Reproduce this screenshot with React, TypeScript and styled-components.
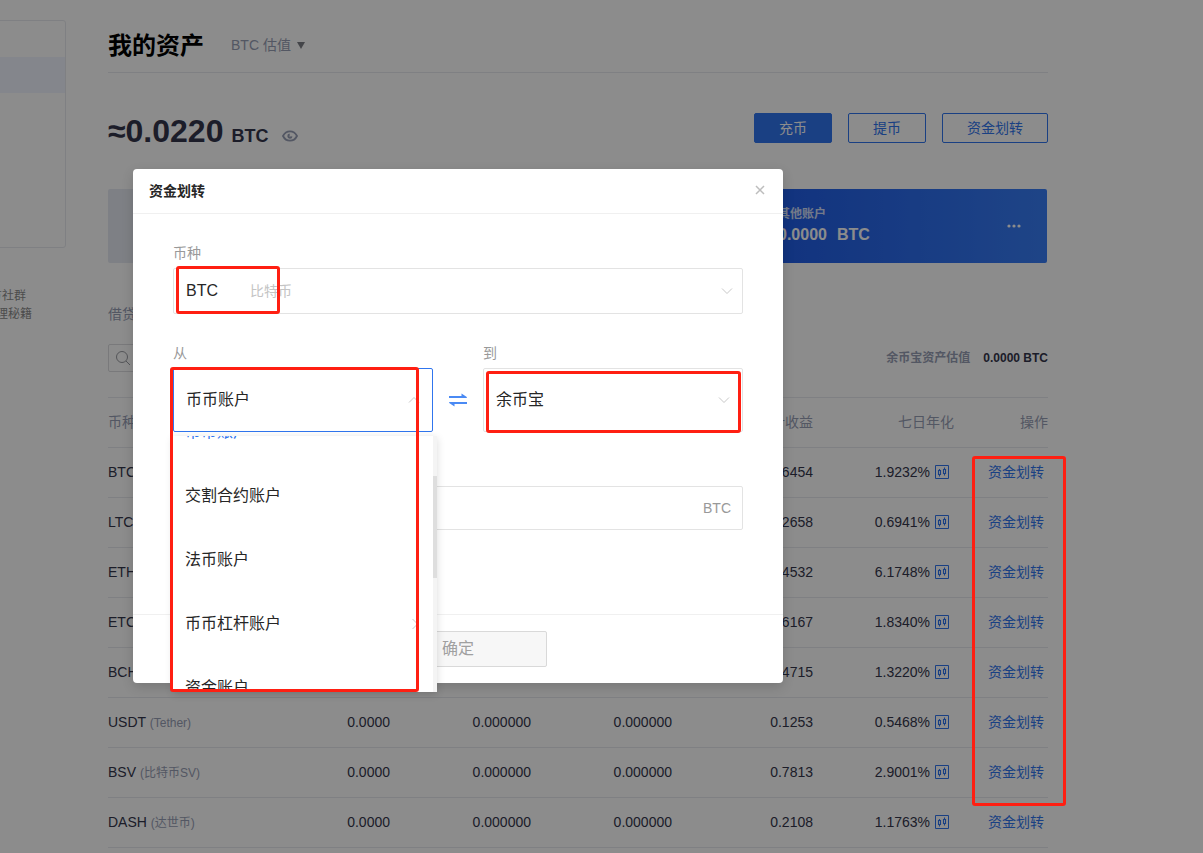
import React, { useEffect, useRef } from 'react';
import styled, { createGlobalStyle } from 'styled-components';

const BLUE = '#3075ee';
const LINE = '#e8eaee';
const MUTED = '#979eb5';
const INK = '#34364c';

const GlobalStyle = createGlobalStyle`
  * { box-sizing: border-box; }
  body {
    margin: 0;
    background: #fff;
    color: ${INK};
    font: 14px/20px "Liberation Sans", "Noto Sans CJK SC", sans-serif;
  }
  button, input, select { font: inherit; }
  h1, h2, ul, p { margin: 0; padding: 0; }
  svg { display: block; flex: none; }
`;

const Page = styled.div`
  position: relative;
  display: flex;
  min-height: 100vh;
  overflow: hidden;
`;

/* Side navigation, partly beyond the left edge */
const Sidebar = styled.aside`
  flex: 0 0 128px;
  margin: 20px 42px 0 -62px;
`;

const NavBox = styled.nav`
  height: 228px;
  padding-top: 36px;
  border: 1px solid ${LINE};
  border-radius: 3px;
`;

const NavActive = styled.div`
  height: 36px;
  background: #f1f4ff;
`;

const HelpLinks = styled.div`
  display: flex;
  flex-direction: column;
  align-items: center;
  margin-top: 39px;
  font-size: 12px;
  line-height: 18px;
`;

const HelpLink = styled.a`
  color: #8c8c8c;
  text-decoration: none;
`;

const Main = styled.main`
  flex: 1;
  min-width: 0;
  margin-right: 155px;
`;

const TitleBar = styled.header`
  display: flex;
  align-items: center;
  gap: 27px;
  height: 73px;
  padding-top: 20px;
  border-bottom: 1px solid ${LINE};
`;

const Title = styled.h1`
  color: #000;
  font-size: 24px;
  line-height: 32px;
`;

const UnitPicker = styled.button`
  display: flex;
  align-items: center;
  gap: 6px;
  padding: 0 0 2px;
  border: 0;
  background: none;
  color: ${MUTED};
`;

const Summary = styled.section`
  display: flex;
  justify-content: space-between;
  align-items: flex-start;
  height: 36px;
  margin-top: 40px;
`;

const Total = styled.div`
  display: flex;
  align-items: baseline;
  font-size: 32px;
  line-height: 36px;
  font-weight: bold;
`;

const TotalUnit = styled.span`
  margin: 0 14px 0 8px;
  font-size: 18px;
`;

const Actions = styled.div`
  display: flex;
  gap: 16px;
`;

const ActionButton = styled.button<{ $primary?: boolean }>`
  height: 30px;
  padding: 0 24px;
  border: 1px solid ${BLUE};
  border-radius: 2px;
  background: ${(p) => (p.$primary ? BLUE : 'transparent')};
  color: ${(p) => (p.$primary ? '#fff' : BLUE)};
  line-height: 20px;
`;

const Cards = styled.section`
  display: grid;
  grid-template-columns: 1fr 290px;
  height: 74px;
  margin: 40px 1px 0 0;
`;

const PlainCard = styled.div`
  border-radius: 2px 0 0 2px;
  background: #e6eaf2;
`;

const BlueCard = styled.div`
  display: flex;
  align-items: center;
  justify-content: space-between;
  padding: 0 26px 0 21px;
  border-radius: 0 2px 2px 0;
  background: linear-gradient(90deg, #1f5be6, #387df6);
  color: #fff;
  font-weight: bold;
`;

const CardText = styled.div`
  padding-bottom: 2px;
`;

const CardLabel = styled.div`
  font-size: 12px;
  line-height: 20px;
  opacity: 0.8;
`;

const CardValue = styled.div`
  display: flex;
  gap: 10px;
  font-size: 16px;
  line-height: 22px;
`;

const SectionTab = styled.a`
  display: block;
  margin-top: 41px;
  color: ${MUTED};
  text-decoration: none;
`;

const Filter = styled.div`
  display: flex;
  align-items: center;
  justify-content: space-between;
  height: 28px;
  margin: 20px 0 25px;
`;

const SearchBox = styled.label`
  display: flex;
  align-items: center;
  width: 180px;
  height: 28px;
  padding-left: 6px;
  border: 1px solid #dcdde0;
  border-radius: 2px;
`;

const SearchInput = styled.input`
  width: 100%;
  border: 0;
  outline: 0;
  background: none;
`;

const Valuation = styled.p`
  display: flex;
  gap: 13px;
  font-size: 12px;
  font-weight: bold;
`;

const Muted = styled.span`
  color: ${MUTED};
`;

const TableArea = styled.div`
  position: relative;
`;

const Table = styled.table`
  width: 100%;
  table-layout: fixed;
  border-collapse: separate;
  border-spacing: 0;
  border-top: 1px solid ${LINE};
`;

const HeadCell = styled.th<{ $width: number }>`
  width: ${(p) => p.$width}%;
  height: 50px;
  padding: 0 0 2px;
  border-bottom: 1px solid ${LINE};
  color: ${MUTED};
  font-weight: normal;
  text-align: right;
  &:first-child { text-align: left; }
`;

const Cell = styled.td`
  height: 50px;
  padding: 0 0 2px;
  border-bottom: 1px solid ${LINE};
  text-align: right;
  white-space: nowrap;
  &:first-child {
    padding: 0;
    text-align: left;
  }
`;

const CoinName = styled.span`
  color: ${MUTED};
  font-size: 12px;
`;

const Rate = styled.div`
  display: flex;
  align-items: center;
  justify-content: flex-end;
  gap: 5px;
  padding-right: 5px;
`;

const RowLink = styled.a`
  padding-right: 4px;
  color: ${BLUE};
  text-decoration: none;
`;

/* Red frames that point out the steps */
const Mark = styled.div<{ $top: number; $left?: number; $right?: number; $width: number; $height: number }>`
  position: absolute;
  z-index: 5;
  top: ${(p) => p.$top}px;
  ${(p) => (p.$right !== undefined ? `right: ${p.$right}px;` : `left: ${p.$left}px;`)}
  width: ${(p) => p.$width}px;
  height: ${(p) => p.$height}px;
  border: 3px solid #ff1f12;
  border-radius: 3px;
  pointer-events: none;
`;

const Overlay = styled.div`
  position: absolute;
  inset: 0;
  z-index: 2;
  padding: 169px 0 0 133px;
  background: rgba(0, 0, 0, 0.45);
`;

const Dialog = styled.div`
  width: 650px;
  border-radius: 4px;
  background: #fff;
  box-shadow: 0 4px 12px rgba(0, 0, 0, 0.15);
  color: #262626;
`;

const DialogHeader = styled.header`
  display: flex;
  align-items: center;
  justify-content: space-between;
  height: 45px;
  padding: 0 18px 0 16px;
  border-bottom: 1px solid #f0f0f0;
`;

const DialogTitle = styled.h2`
  font-size: 14px;
`;

const CloseButton = styled.button`
  padding: 0 0 2px;
  border: 0;
  background: none;
`;

const DialogBody = styled.div`
  padding: 28px 40px 84px;
`;

const Label = styled.label`
  display: block;
  height: 26px;
  color: #999;
  line-height: 22px;
`;

const Control = styled.div`
  position: relative;
`;

const Select = styled.select<{ $height: number; $open?: boolean }>`
  display: block;
  width: 100%;
  height: ${(p) => p.$height}px;
  padding: 0 12px;
  border: 1px solid ${(p) => (p.$open ? BLUE : '#e3e3e3')};
  border-radius: 2px;
  outline: 0;
  appearance: none;
  background: #fff;
  color: #262626;
  font-size: 16px;
`;

const SelectHint = styled.span`
  position: absolute;
  top: 13px;
  left: 77px;
  color: #c4c4c4;
  pointer-events: none;
`;

const SelectArrow = styled.span<{ $right: number; $up?: boolean }>`
  position: absolute;
  top: 50%;
  right: ${(p) => p.$right}px;
  transform: translateY(-50%) ${(p) => (p.$up ? 'rotate(180deg)' : '')};
  pointer-events: none;
`;

const Accounts = styled.div`
  display: grid;
  grid-template-columns: 1fr 50px 1fr;
  margin: 28px 0;
`;

const SwapButton = styled.button`
  display: flex;
  justify-content: center;
  align-items: center;
  height: 64px;
  margin-top: 26px;
  padding: 0;
  border: 0;
  background: none;
`;

const Menu = styled.div`
  position: absolute;
  z-index: 3;
  top: 68px;
  left: 0;
  right: -4px;
  height: 256px;
  background: #fff;
  box-shadow: 0 2px 8px rgba(0, 0, 0, 0.15);
`;

const MenuList = styled.ul`
  height: 256px;
  overflow-y: scroll;
  scrollbar-width: none;
  list-style: none;
`;

const MenuItem = styled.li<{ $selected: boolean }>`
  display: flex;
  align-items: center;
  justify-content: space-between;
  height: 64px;
  padding: 0 19px 0 12px;
  color: ${(p) => (p.$selected ? BLUE : '#262626')};
  font-size: 16px;
`;

const ScrollTrack = styled.div`
  position: absolute;
  top: 0;
  right: 0;
  bottom: 0;
  width: 4px;
  padding-top: 40px;
  background: #f4f4f4;
`;

const ScrollThumb = styled.div`
  height: 102px;
  background: #dedede;
`;

const AmountBox = styled.div`
  display: flex;
  align-items: center;
  height: 44px;
  padding: 0 11px;
  border: 1px solid #e3e3e3;
  border-radius: 2px;
  color: #999;
`;

const AmountInput = styled.input`
  flex: 1;
  min-width: 0;
  border: 0;
  outline: 0;
  background: none;
`;

const DialogFooter = styled.footer`
  display: flex;
  justify-content: center;
  padding: 16px;
  border-top: 1px solid #f0f0f0;
`;

const ConfirmButton = styled.button`
  width: 178px;
  height: 36px;
  border: 1px solid #d9d9d9;
  border-radius: 2px;
  background: #f7f7f7;
  color: #a0a0a0;
  font-size: 16px;
`;

const Chevron = () => (
  <svg width="12" height="8" viewBox="0 0 12 8" fill="none" stroke="#c8c8c8">
    <path d="M1 1.5l5 5 5-5" />
  </svg>
);

const EyeIcon = () => (
  <svg width="16" height="12" viewBox="0 0 16 12" fill="none" stroke={MUTED} strokeWidth="1.8">
    <path d="M1 6C2.6 2.800 5 1.300 8 1.300S13.400 2.800 15 6c-1.600 3.200-4 4.700-7 4.700S2.600 9.200 1 6z" />
    <path d="M7.700 4.500A1.600 1.600 0 1 0 9.500 6.300" strokeWidth="2" />
  </svg>
);

const SearchIcon = () => (
  <svg width="16" height="16" viewBox="0 0 16 16" fill="none" stroke="#9a9ca2">
    <circle cx="7" cy="7" r="5.500" />
    <path d="M11 11l4 4" />
  </svg>
);

const CandleIcon = () => (
  <svg width="14" height="14" viewBox="0 0 14 14" fill="none" stroke={BLUE}>
    <path d="M.5 .5h13v13H.5z" />
    <path
      d="M3.500 5.500h2v4h-2zM8.500 4.500h2v4h-2zM4.500 4v1.500M4.500 9.500V11.500M9.500 2.500v2M9.500 8.500V10.500"
      strokeWidth="1.100"
    />
  </svg>
);

const SwapIcon = () => (
  <svg width="18" height="14" viewBox="0 0 18 14" fill="#4a8af4">
    <path d="M0 3h12.500V.5L17.800 4v1H0z" />
    <path d="M18 11H5.500v2.500L.200 10V9H18z" />
  </svg>
);

const columns: [string, number][] = [
  ['币种', 15],
  ['余额', 15],
  ['可用', 15],
  ['冻结', 15],
  ['累计收益', 15],
  ['七日年化', 15],
  ['操作', 10],
];

const coins = [
  { code: 'BTC', name: '比特币', income: '0.6454', rate: '1.9232%' },
  { code: 'LTC', name: '莱特币', income: '0.2658', rate: '0.6941%' },
  { code: 'ETH', name: '以太坊', income: '0.4532', rate: '6.1748%' },
  { code: 'ETC', name: '以太经典', income: '0.6167', rate: '1.8340%' },
  { code: 'BCH', name: '比特币现金', income: '0.4715', rate: '1.3220%' },
  { code: 'USDT', name: 'Tether', income: '0.1253', rate: '0.5468%' },
  { code: 'BSV', name: '比特币SV', income: '0.7813', rate: '2.9001%' },
  { code: 'DASH', name: '达世币', income: '0.2108', rate: '1.1763%' },
];

const accounts = [
  '全部账户',
  '币币账户',
  '交割合约账户',
  '法币账户',
  '币币杠杆账户',
  '资金账户',
  '永续合约账户',
  '期权账户',
  '余币宝',
  '矿池账户',
];

function AccountMenu() {
  const list = useRef<HTMLUListElement>(null);
  useEffect(() => {
    if (list.current) list.current.scrollTop = 100;
  }, []);
  return (
    <Menu>
      <MenuList ref={list} role="listbox" aria-label="从">
        {accounts.map((name) => (
          <MenuItem key={name} role="option" aria-selected={name === '币币账户'} $selected={name === '币币账户'}>
            {name}
            {name === '币币杠杆账户' && (
              <svg width="6" height="12" viewBox="0 0 6 12" fill="none" stroke="#c8c8c8">
                <path d="M.5 1l5 5-5 5" />
              </svg>
            )}
          </MenuItem>
        ))}
      </MenuList>
      <ScrollTrack>
        <ScrollThumb />
      </ScrollTrack>
    </Menu>
  );
}

function TransferDialog() {
  return (
    <Dialog role="dialog" aria-labelledby="transfer-title">
      <DialogHeader>
        <DialogTitle id="transfer-title">资金划转</DialogTitle>
        <CloseButton aria-label="关闭">
          <svg width="10" height="10" viewBox="0 0 10 10" stroke="#bdbdbd" strokeWidth="1.500">
            <path d="M1 1l8 8M9 1L1 9" />
          </svg>
        </CloseButton>
      </DialogHeader>
      <DialogBody>
        <Label htmlFor="coin">币种</Label>
        <Control>
          <Select id="coin" $height={46}>
            <option>BTC</option>
          </Select>
          <SelectHint>比特币</SelectHint>
          <SelectArrow $right={10}>
            <Chevron />
          </SelectArrow>
          <Mark $top={-2} $left={3} $width={104} $height={48} />
        </Control>
        <Accounts>
          <div>
            <Label htmlFor="from">从</Label>
            <Control>
              <Select id="from" $height={64} $open>
                <option>币币账户</option>
              </Select>
              <SelectArrow $right={13} $up>
                <Chevron />
              </SelectArrow>
              <AccountMenu />
              <Mark $top={-1} $left={-3} $width={249} $height={325} />
            </Control>
          </div>
          <SwapButton aria-label="互换">
            <SwapIcon />
          </SwapButton>
          <div>
            <Label htmlFor="to">到</Label>
            <Control>
              <Select id="to" $height={64}>
                <option>余币宝</option>
              </Select>
              <SelectArrow $right={13}>
                <Chevron />
              </SelectArrow>
              <Mark $top={3} $left={3} $width={255} $height={62} />
            </Control>
          </div>
        </Accounts>
        <Label htmlFor="amount">数量</Label>
        <AmountBox>
          <AmountInput id="amount" type="text" />
          <span>BTC</span>
        </AmountBox>
      </DialogBody>
      <DialogFooter>
        <ConfirmButton>确定</ConfirmButton>
      </DialogFooter>
    </Dialog>
  );
}

export default function App() {
  return (
    <Page>
      <GlobalStyle />
      <Sidebar>
        <NavBox>
          <NavActive />
        </NavBox>
        <HelpLinks>
          <HelpLink href="#community">官方社群</HelpLink>
          <HelpLink href="#tips">资产理秘籍</HelpLink>
        </HelpLinks>
      </Sidebar>
      <Main>
        <TitleBar>
          <Title>我的资产</Title>
          <UnitPicker>
            BTC 估值
            <svg width="8" height="7" viewBox="0 0 8 7" fill="#7d7f86">
              <path d="M0 0h8L4 7z" />
            </svg>
          </UnitPicker>
        </TitleBar>
        <Summary>
          <Total>
            ≈0.0220
            <TotalUnit>BTC</TotalUnit>
            <EyeIcon />
          </Total>
          <Actions>
            <ActionButton $primary>充币</ActionButton>
            <ActionButton>提币</ActionButton>
            <ActionButton>资金划转</ActionButton>
          </Actions>
        </Summary>
        <Cards>
          <PlainCard />
          <BlueCard>
            <CardText>
              <CardLabel>其他账户</CardLabel>
              <CardValue>
                <span>0.0000</span>
                <span>BTC</span>
              </CardValue>
            </CardText>
            <svg width="14" height="4" viewBox="0 0 14 4" fill="#fff">
              <circle cx="2" cy="2" r="1.600" />
              <circle cx="7" cy="2" r="1.600" />
              <circle cx="12" cy="2" r="1.600" />
            </svg>
          </BlueCard>
        </Cards>
        <SectionTab href="#loan">借贷</SectionTab>
        <Filter>
          <SearchBox>
            <SearchIcon />
            <SearchInput type="text" aria-label="搜索" />
          </SearchBox>
          <Valuation>
            <Muted>余币宝资产估值</Muted>
            <span>0.0000 BTC</span>
          </Valuation>
        </Filter>
        <TableArea>
          <Table>
            <thead>
              <tr>
                {columns.map(([name, width]) => (
                  <HeadCell key={name} $width={width}>
                    {name}
                  </HeadCell>
                ))}
              </tr>
            </thead>
            <tbody>
              {coins.map((coin) => (
                <tr key={coin.code}>
                  <Cell>
                    {coin.code} <CoinName>({coin.name})</CoinName>
                  </Cell>
                  <Cell>0.0000</Cell>
                  <Cell>0.000000</Cell>
                  <Cell>0.000000</Cell>
                  <Cell>{coin.income}</Cell>
                  <Cell>
                    <Rate>
                      {coin.rate}
                      <CandleIcon />
                    </Rate>
                  </Cell>
                  <Cell>
                    <RowLink href="#transfer">资金划转</RowLink>
                  </Cell>
                </tr>
              ))}
            </tbody>
          </Table>
          <Mark $top={59} $right={-18} $width={94} $height={350} />
        </TableArea>
      </Main>
      <Overlay>
        <TransferDialog />
      </Overlay>
    </Page>
  );
}
